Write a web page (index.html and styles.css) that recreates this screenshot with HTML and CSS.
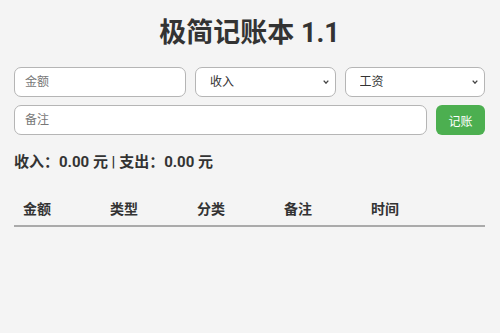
FILE: index.html
```html
<!DOCTYPE html>
<html lang="zh">
<head>
<meta charset="utf-8">
<title>极简记账本 1.1</title>
<link rel="stylesheet" href="styles.css">
</head>
<body>
<div class="app">
  <h1 class="title">极简记账本 1.1</h1>
  <div class="row row-top">
    <input class="field amount" type="text" placeholder="金额">
    <div class="select-wrap">
      <select class="field">
        <option>收入</option>
        <option>支出</option>
      </select>
      <svg class="chev" width="6" height="4" viewBox="0 0 6 4"><polyline points="0.7,0.6 3,3.1 5.3,0.6" fill="none" stroke="#444" stroke-width="1.4"/></svg>
    </div>
    <div class="select-wrap">
      <select class="field">
        <option>工资</option>
        <option>奖金</option>
      </select>
      <svg class="chev" width="6" height="4" viewBox="0 0 6 4"><polyline points="0.7,0.6 3,3.1 5.3,0.6" fill="none" stroke="#444" stroke-width="1.4"/></svg>
    </div>
  </div>
  <div class="row row-note">
    <input class="field note" type="text" placeholder="备注">
    <button class="btn" type="button">记账</button>
  </div>
  <div class="summary">收入：0.00 元 | 支出：0.00 元</div>
  <table class="records">
    <thead>
      <tr>
        <th class="col">金额</th>
        <th class="col">类型</th>
        <th class="col">分类</th>
        <th class="col">备注</th>
        <th>时间</th>
      </tr>
    </thead>
    <tbody></tbody>
  </table>
</div>
</body>
</html>
```
FILE: styles.css
```css
html, body {
  margin: 0;
  padding: 0;
  background: #f4f4f4;
}
body {
  font-family: Roboto, "Noto Sans CJK SC", sans-serif;
  color: #333;
}
.app {
  padding: 0 15px 0 14px;
}
.title {
  margin: 16px 0 17px;
  font-size: 27px;
  line-height: 34px;
  font-weight: 700;
  text-align: center;
  color: #333;
}
.row {
  display: flex;
  gap: 9px;
}
.row-top {
  margin-bottom: 8px;
}
.field {
  box-sizing: border-box;
  height: 30px;
  border: 1px solid #b5b5b5;
  border-radius: 7px;
  background: #fff;
  font-family: Roboto, "Noto Sans CJK SC", sans-serif;
  font-size: 12px;
  color: #333;
  padding: 0 10px;
  outline: none;
}
.field::placeholder {
  color: #777;
}
.row-top .amount {
  flex: 0 0 172px;
  min-width: 0;
}
.select-wrap {
  position: relative;
  flex: 1 1 0;
  min-width: 0;
  display: flex;
}
.select-wrap select {
  flex: 1 1 auto;
  width: 100%;
  min-width: 0;
  -webkit-appearance: none;
  appearance: none;
  padding: 0 20px 0 14px;
}
.chev {
  position: absolute;
  right: 7px;
  top: 13px;
  pointer-events: none;
}
.note {
  flex: 1 1 auto;
  min-width: 0;
}
.btn {
  flex: 0 0 49px;
  height: 30px;
  border: none;
  border-radius: 6px;
  background: #4caf50;
  color: #fff;
  font-family: Roboto, "Noto Sans CJK SC", sans-serif;
  font-size: 12px;
  padding: 0;
}
.summary {
  margin-top: 15px;
  font-size: 15px;
  line-height: 24px;
  font-weight: 700;
  color: #333;
}
.records {
  width: 100%;
  margin-top: 15px;
  border-collapse: collapse;
}
.records th {
  text-align: left;
  font-size: 14px;
  line-height: 20px;
  font-weight: 700;
  color: #333;
  padding: 10px 9px 6px;
  border-bottom: 2px solid #aaa;
}
.records th.col {
  width: 69px;
}
```
